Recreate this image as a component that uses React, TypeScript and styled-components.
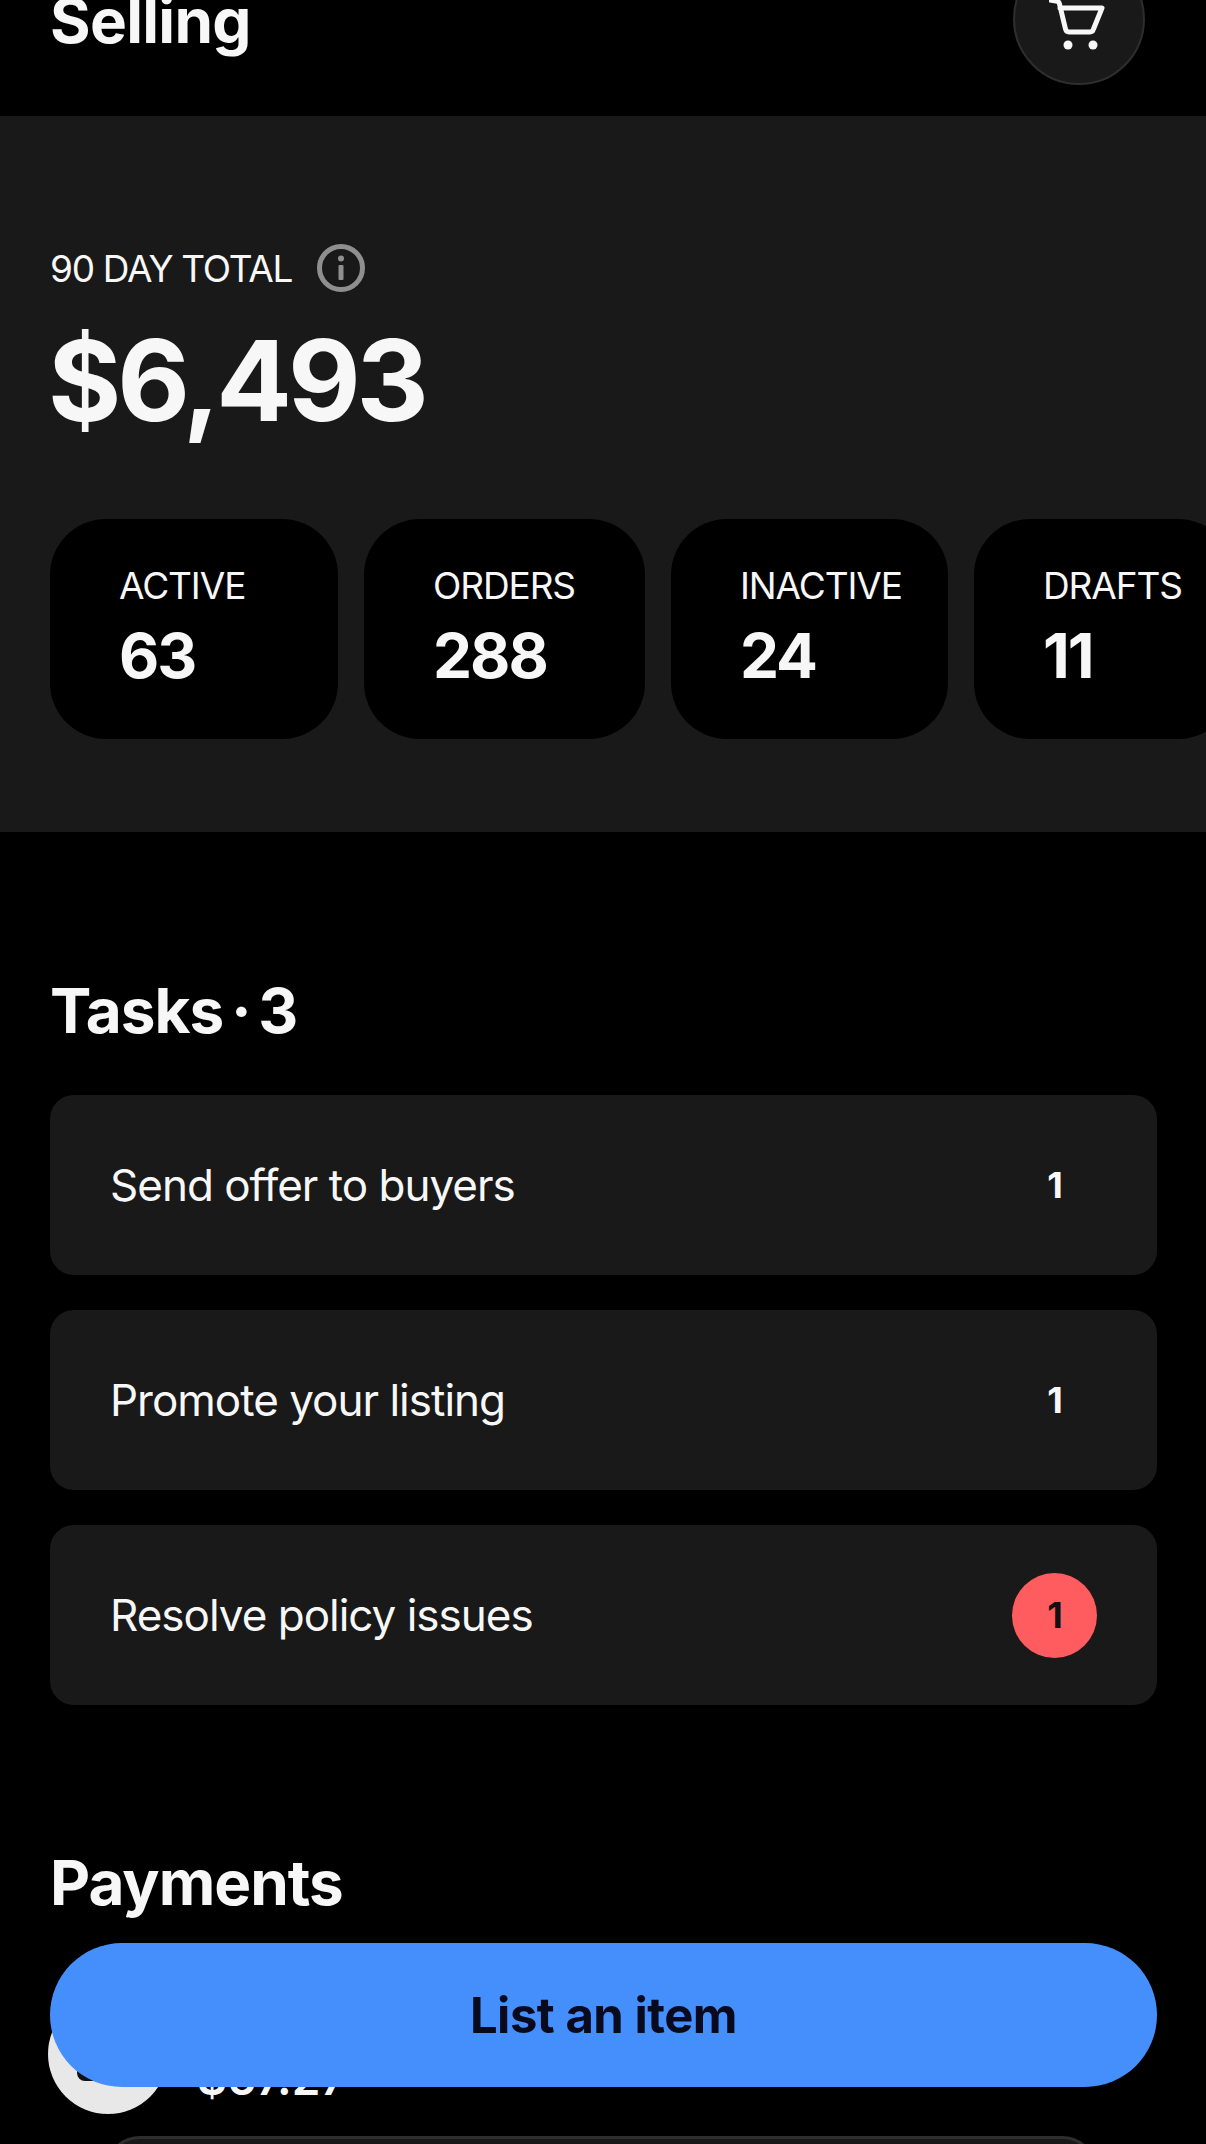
import styled, { createGlobalStyle } from "styled-components";

const GlobalStyle = createGlobalStyle`
  html, body {
    margin: 0;
    padding: 0;
    background: #000;
  }
  * {
    box-sizing: border-box;
  }
`;

const Page = styled.div`
  position: relative;
  width: 1206px;
  height: 2144px;
  overflow: hidden;
  background: #000;
  color: #f7f7f7;
  font-family: Inter, "Liberation Sans", sans-serif;
`;

const Header = styled.header`
  height: 116px;
  padding: 0 50px;
  display: flex;
  justify-content: space-between;
  align-items: flex-start;
`;

const PageTitle = styled.h1`
  margin: -17px 0 0;
  font-size: 62px;
  line-height: 76px;
  font-weight: 700;
  letter-spacing: -0.7px;
`;

const CartButton = styled.div`
  width: 132px;
  height: 132px;
  margin: -47px 11px 0 0;
  border-radius: 50%;
  background: #191919;
  border: 2px solid #2e2e2e;
  display: flex;
  align-items: center;
  justify-content: center;
`;

const Hero = styled.section`
  height: 716px;
  padding: 128px 0 0 50px;
  background: #191919;
  overflow: hidden;
`;

const TotalRow = styled.div`
  display: flex;
  align-items: center;
  gap: 25px;
  height: 48px;
  font-size: 37px;
  letter-spacing: -1.3px;
  font-weight: 400;
`;

const Amount = styled.div`
  margin: 20px 0 0 -2px;
  font-size: 112px;
  line-height: 136px;
  font-weight: 700;
  letter-spacing: -4px;
`;

const Stats = styled.div`
  display: flex;
  gap: 26px;
  margin-top: 71px;
`;

const StatCard = styled.div<{ $width: number }>`
  flex: none;
  width: ${(p) => p.$width}px;
  height: 220px;
  padding: 45px 0 0 69px;
  background: #000;
  border-radius: 56px;
`;

const StatLabel = styled.div`
  font-size: 37px;
  line-height: 44px;
  letter-spacing: -1.1px;
`;

const StatValue = styled.div`
  margin-top: 10px;
  font-size: 62px;
  line-height: 76px;
  font-weight: 700;
  letter-spacing: -2px;
`;

const Section = styled.section<{ $top: number }>`
  padding: ${(p) => p.$top}px 49px 0 50px;
`;

const SectionTitle = styled.h2`
  margin: 0;
  font-size: 62px;
  line-height: 72px;
  font-weight: 700;
  letter-spacing: -1px;
  word-spacing: -6px;
`;

const TaskList = styled.div`
  display: flex;
  flex-direction: column;
  gap: 35px;
  margin-top: 48px;
`;

const TaskRow = styled.div`
  height: 180px;
  padding: 0 60px 0 60px;
  display: flex;
  align-items: center;
  justify-content: space-between;
  background: #191919;
  border-radius: 24px;
  font-size: 44px;
  letter-spacing: -1px;
`;

const TaskCount = styled.div<{ $alert?: boolean }>`
  width: 85px;
  height: 85px;
  border-radius: 50%;
  display: flex;
  align-items: center;
  justify-content: center;
  font-size: 36px;
  font-weight: 700;
  background: ${(p) => (p.$alert ? "#ff5c60" : "transparent")};
  color: ${(p) => (p.$alert ? "#111" : "#f7f7f7")};
`;

const PaymentRow = styled.div`
  display: flex;
  gap: 29px;
  margin: 75px 0 0 -2px;
`;

const Avatar = styled.div`
  position: relative;
  width: 120px;
  height: 120px;
  flex: none;
  border-radius: 50%;
  background: #e8e8e8;
`;

const AvatarMark = styled.div`
  position: absolute;
  left: 29px;
  top: 33px;
  width: 62px;
  height: 54px;
  border-radius: 8px;
  background: #111;
`;

const PaymentAmount = styled.div`
  margin-top: 58px;
  font-size: 46px;
  line-height: 52px;
  font-weight: 600;
`;

const PaymentPanel = styled.div`
  height: 70px;
  margin: 22px 60px 0 55px;
  background: #191919;
  border: 3px solid #2e2e2e;
  border-radius: 48px;
`;

const ListButton = styled.button`
  position: absolute;
  left: 50px;
  top: 1943px;
  width: 1107px;
  height: 144px;
  border: none;
  border-radius: 72px;
  background: #458ffc;
  color: #0a0a1e;
  font-family: inherit;
  font-size: 49px;
  font-weight: 700;
  letter-spacing: -0.5px;
`;

function CartIcon() {
  return (
    <svg width="60" height="64" viewBox="0 0 60 64" fill="none" stroke="#f7f7f7" strokeWidth="5" strokeLinecap="round" strokeLinejoin="round">
      <path d="M1 13l6 1c2 0 3 1 3.500 3l6 25c.5 2 1.500 3 3.500 3h21c2 0 3-1 3.500-3L53 21H11" />
      <circle cx="19" cy="58" r="4.500" fill="#f7f7f7" stroke="none" />
      <circle cx="44" cy="58" r="4.500" fill="#f7f7f7" stroke="none" />
    </svg>
  );
}

function InfoIcon() {
  return (
    <svg width="48" height="48" viewBox="0 0 48 48" fill="none">
      <circle cx="24" cy="24" r="21.5" stroke="#8f8f8f" strokeWidth="5" />
      <circle cx="24" cy="14.5" r="3" fill="#8f8f8f" />
      <rect x="21.5" y="21" width="5" height="15" rx="1" fill="#8f8f8f" />
    </svg>
  );
}

const stats = [
  { label: "ACTIVE", value: "63", width: 288 },
  { label: "ORDERS", value: "288", width: 281 },
  { label: "INACTIVE", value: "24", width: 277 },
  { label: "DRAFTS", value: "11", width: 260 },
];

const tasks = [
  { label: "Send offer to buyers", count: 1 },
  { label: "Promote your listing", count: 1 },
  { label: "Resolve policy issues", count: 1, alert: true },
];

export default function App() {
  return (
    <>
      <GlobalStyle />
      <Page>
        <Header>
          <PageTitle>Selling</PageTitle>
          <CartButton>
            <CartIcon />
          </CartButton>
        </Header>
        <Hero>
          <TotalRow>
            90 DAY TOTAL
            <InfoIcon />
          </TotalRow>
          <Amount>$6,493</Amount>
          <Stats>
            {stats.map((s) => (
              <StatCard key={s.label} $width={s.width}>
                <StatLabel>{s.label}</StatLabel>
                <StatValue>{s.value}</StatValue>
              </StatCard>
            ))}
          </Stats>
        </Hero>
        <Section $top={143}>
          <SectionTitle>Tasks · 3</SectionTitle>
          <TaskList>
            {tasks.map((t) => (
              <TaskRow key={t.label}>
                {t.label}
                <TaskCount $alert={t.alert}>{t.count}</TaskCount>
              </TaskRow>
            ))}
          </TaskList>
        </Section>
        <Section $top={142}>
          <SectionTitle>Payments</SectionTitle>
          <PaymentRow>
            <Avatar>
              <AvatarMark />
            </Avatar>
            <PaymentAmount>$67.27</PaymentAmount>
          </PaymentRow>
          <PaymentPanel />
        </Section>
        <ListButton>List an item</ListButton>
      </Page>
    </>
  );
}
